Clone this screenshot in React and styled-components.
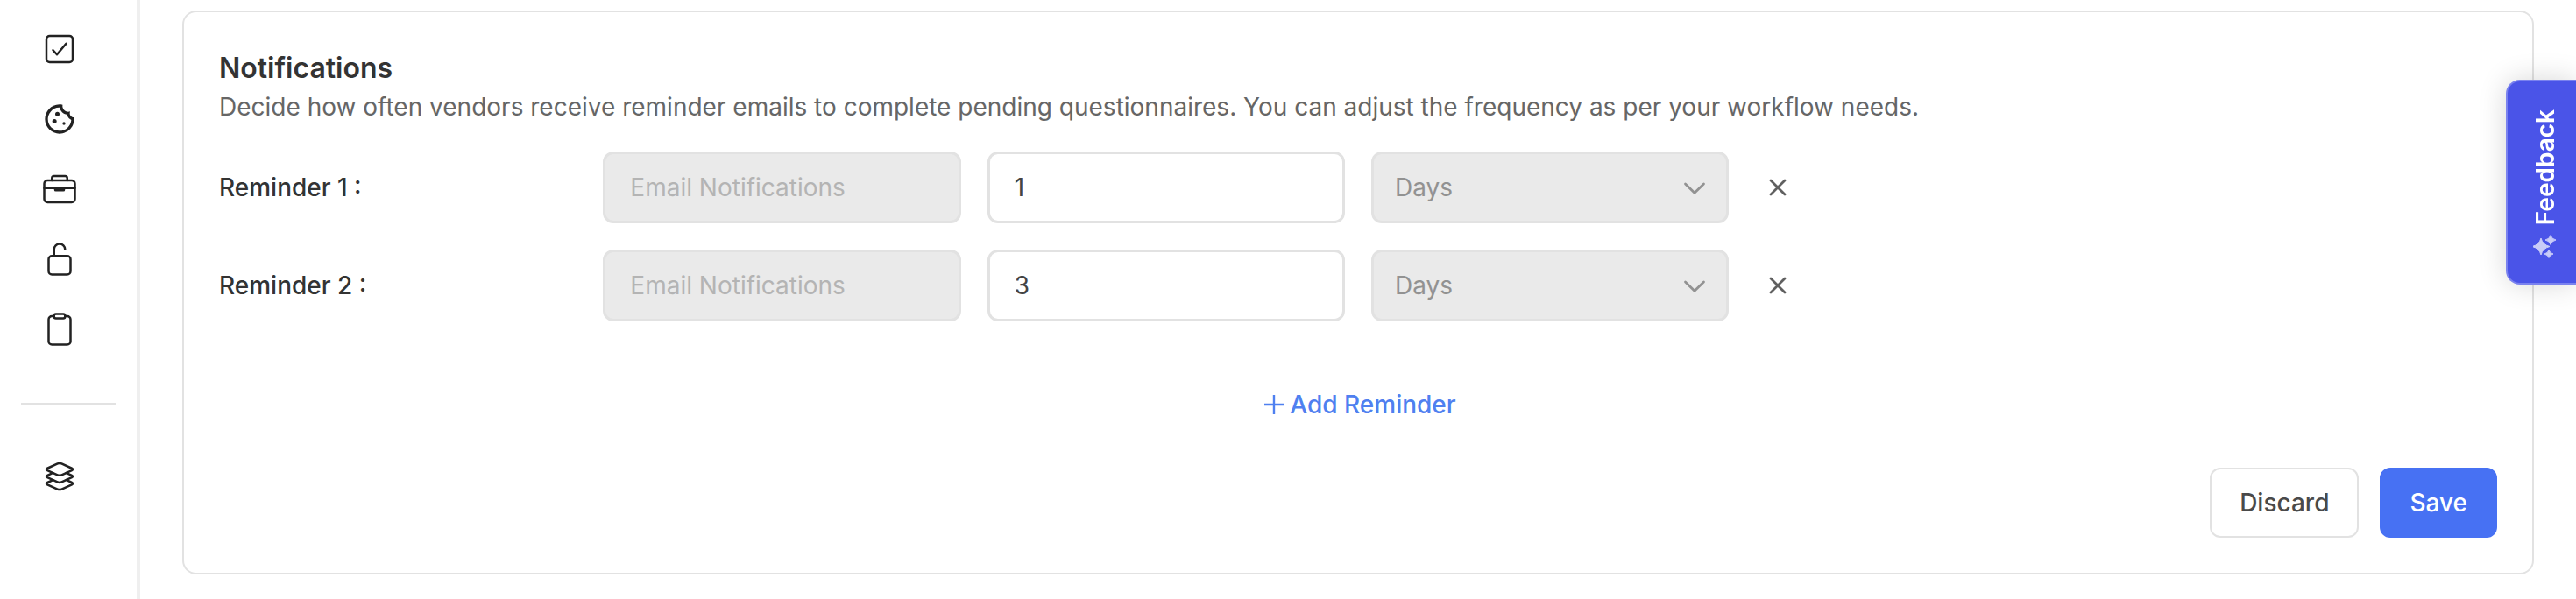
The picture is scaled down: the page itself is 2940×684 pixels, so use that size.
import React, { useState } from "react";
import styled, { createGlobalStyle } from "styled-components";
import { MdOutlineCookie } from "react-icons/md";
import {
  IoBriefcaseOutline,
  IoCheckboxOutline,
  IoClipboardOutline,
  IoLayersOutline,
  IoLockOpenOutline
} from "react-icons/io5";

const GlobalStyle = createGlobalStyle`
  * {
    box-sizing: border-box;
  }

  body {
    margin: 0;
    background: #fff;
    color: #333;
    font-family: Inter, "Liberation Sans", sans-serif;
    font-size: 28px;
  }

  button, input, select {
    font: inherit;
  }
`;

const Page = styled.div`
  display: flex;
  min-height: 100vh;
`;

const Sidebar = styled.aside`
  flex: 0 0 160px;
  padding: 16px 24px;
  border-right: 4px solid #efefef;
`;

const NavGroup = styled.nav`
  display: flex;
  flex-direction: column;

  & + & {
    margin-top: 44px;
    padding-top: 42px;
    border-top: 2px solid #e2e2e2;
  }
`;

const NavLink = styled.a`
  display: flex;
  align-items: center;
  height: 80px;
  padding-left: 24px;
  color: #222;

  & svg {
    width: 40px;
    height: 40px;
  }
`;

const Main = styled.main`
  flex: 1;
  min-width: 0;
  padding: 12px 48px 28px;
`;

const Card = styled.form`
  padding: 40px;
  border: 2px solid #e2e2e2;
  border-radius: 16px;
`;

const Title = styled.h2`
  margin: 0;
  font-size: 32px;
  font-weight: 600;
  line-height: 48px;
`;

const Description = styled.p`
  margin: 0 0 31px;
  color: #666;
  line-height: 40px;
`;

const Rows = styled.div`
  display: grid;
  gap: 30px;
`;

const Row = styled.div`
  display: grid;
  grid-template-columns: repeat(6, 1fr);
  column-gap: 30px;
  align-items: center;
`;

const Label = styled.label`
  font-weight: 500;
`;

const Input = styled.input`
  width: 100%;
  height: 82px;
  padding: 0 28px;
  border: 3px solid #e2e2e2;
  border-radius: 12px;
  background: #fff;
  color: #444;

  &:disabled {
    background: #eaeaea;
  }

  &::placeholder {
    color: #b4b4b4;
    opacity: 1;
  }
`;

const SelectBox = styled.div`
  position: relative;

  & svg {
    position: absolute;
    top: 50%;
    right: 26px;
    margin-top: -7px;
    pointer-events: none;
  }
`;

const Select = styled.select`
  display: block;
  appearance: none;
  width: 100%;
  height: 82px;
  padding: 0 24px;
  border: 3px solid #e2e2e2;
  border-radius: 12px;
  background: #eaeaea;
  color: #929292;
  opacity: 1;
`;

const RemoveButton = styled.button`
  display: flex;
  align-items: center;
  justify-content: center;
  width: 52px;
  height: 52px;
  padding: 0;
  border: 0;
  background: none;
  color: #606060;
  cursor: pointer;
`;

const AddButton = styled.button`
  display: flex;
  align-items: center;
  gap: 6px;
  height: 48px;
  margin: 71px auto 48px;
  padding: 0 0 0 4px;
  border: 0;
  background: none;
  color: #4f80f0;
  font-weight: 500;
  cursor: pointer;
`;

const Actions = styled.div`
  display: flex;
  justify-content: flex-end;
  gap: 24px;
`;

const Button = styled.button`
  height: 80px;
  padding: 0 32px;
  border: 2px solid ${p => (p.$primary ? "#4771f3" : "#e2e2e2")};
  border-radius: 12px;
  background: ${p => (p.$primary ? "#4771f3" : "#fff")};
  color: ${p => (p.$primary ? "#fff" : "#4a4a4a")};
  font-weight: 500;
  cursor: pointer;
`;

const FeedbackTab = styled.button`
  position: fixed;
  top: 91px;
  right: 0;
  display: flex;
  flex-direction: column;
  align-items: center;
  gap: 11px;
  width: 80px;
  padding: 32px 18px 27px 26px;
  border: 2px solid #7a82ef;
  border-right: 0;
  border-radius: 16px 0 0 16px;
  background: #4a54e8;
  box-shadow: 0 0 32px rgba(0, 0, 0, 0.16);
  color: #fff;
  font-weight: 600;
  line-height: 32px;
  cursor: pointer;
`;

const FeedbackText = styled.span`
  writing-mode: vertical-rl;
  transform: rotate(180deg);
`;

const ChevronIcon = () => (
  <svg width="26" height="16" viewBox="0 0 26 16" fill="none" aria-hidden="true">
    <path d="M2.500 3L13 13.200L23.500 3" stroke="#929292" strokeWidth="2.800" strokeLinecap="round" strokeLinejoin="round" />
  </svg>
);

const CloseIcon = () => (
  <svg width="22" height="22" viewBox="0 0 22 22" fill="none" aria-hidden="true">
    <path d="M3 3l16 16M19 3L3 19" stroke="currentColor" strokeWidth="2.800" strokeLinecap="round" />
  </svg>
);

const PlusIcon = () => (
  <svg width="24" height="24" viewBox="0 0 24 24" fill="none" aria-hidden="true">
    <path d="M12 1v22M1 12h22" stroke="currentColor" strokeWidth="2.400" />
  </svg>
);

const SparkleIcon = () => (
  <svg width="28" height="28" viewBox="1 0 28 28" fill="#c9ccf8" aria-hidden="true">
    <path d="M10 4Q12 11.500 20 13.500Q12 15.500 10 23Q8 15.500 0 13.500Q8 11.500 10 4Z" stroke="#c9ccf8" />
    <path d="M21 0.500Q22 5 27 6Q22 7 21 11.500Q20 7 15 6Q20 5 21 0.500Z" stroke="#c9ccf8" />
    <path d="M19 17.500Q20 21 24 22Q20 23 19 26.500Q18 23 14 22Q18 21 19 17.500Z" stroke="#c9ccf8" />
  </svg>
);

const mainLinks = [
  { name: "Tasks", Icon: IoCheckboxOutline },
  { name: "Cookies", Icon: MdOutlineCookie },
  { name: "Vendors", Icon: IoBriefcaseOutline },
  { name: "Access", Icon: IoLockOpenOutline },
  { name: "Assessments", Icon: IoClipboardOutline }
];

const moreLinks = [{ name: "Layers", Icon: IoLayersOutline }];

const renderLink = ({ name, Icon }) => (
  <NavLink key={name} href="#" aria-label={name}>
    <Icon />
  </NavLink>
);

export default function App() {
  const [reminders, setReminders] = useState([
    { id: 1, every: "1" },
    { id: 2, every: "3" }
  ]);

  const update = (id, every) =>
    setReminders(reminders.map(r => (r.id === id ? { ...r, every } : r)));
  const remove = id => setReminders(reminders.filter(r => r.id !== id));
  const add = () => setReminders([...reminders, { id: Date.now(), every: "1" }]);

  return (
    <Page>
      <GlobalStyle />
      <Sidebar>
        <NavGroup>{mainLinks.map(renderLink)}</NavGroup>
        <NavGroup>{moreLinks.map(renderLink)}</NavGroup>
      </Sidebar>
      <Main>
        <Card onSubmit={e => e.preventDefault()}>
          <Title>Notifications</Title>
          <Description>
            Decide how often vendors receive reminder emails to complete pending
            questionnaires. You can adjust the frequency as per your workflow
            needs.
          </Description>
          <Rows>
            {reminders.map(({ id, every }, index) => (
              <Row key={id}>
                <Label htmlFor={`every-${id}`}>{`Reminder ${index + 1} :`}</Label>
                <Input placeholder="Email Notifications" aria-label="Channel" disabled />
                <Input
                  id={`every-${id}`}
                  inputMode="numeric"
                  value={every}
                  onChange={e => update(id, e.target.value)}
                />
                <SelectBox>
                  <Select aria-label="Unit" disabled>
                    <option>Days</option>
                  </Select>
                  <ChevronIcon />
                </SelectBox>
                <RemoveButton type="button" aria-label="Remove reminder" onClick={() => remove(id)}>
                  <CloseIcon />
                </RemoveButton>
              </Row>
            ))}
          </Rows>
          <AddButton type="button" onClick={add}>
            <PlusIcon />
            Add Reminder
          </AddButton>
          <Actions>
            <Button type="button">Discard</Button>
            <Button type="submit" $primary>
              Save
            </Button>
          </Actions>
        </Card>
      </Main>
      <FeedbackTab type="button">
        <FeedbackText>Feedback</FeedbackText>
        <SparkleIcon />
      </FeedbackTab>
    </Page>
  );
}
